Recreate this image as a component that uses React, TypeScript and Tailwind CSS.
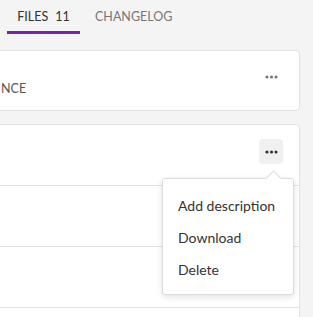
function Dots({ className }: { className?: string }) {
  return (
    <svg width="13" height="4" viewBox="0 0 13 4" className={className}>
      <circle cx="2" cy="2" r="1.6" fill="currentColor" />
      <circle cx="6.5" cy="2" r="1.6" fill="currentColor" />
      <circle cx="11" cy="2" r="1.6" fill="currentColor" />
    </svg>
  );
}

export default function App() {
  return (
    <div className="h-[317px] w-[313px] overflow-hidden bg-[#f4f4f4] font-['Lato',sans-serif]">
      <div className="flex h-[50px] items-start pl-[7px]">
        <div className="flex h-[34px] w-[73px] flex-col items-center justify-end">
          <div className="flex items-baseline gap-[7px] text-[12.5px] leading-none text-[#333]">
            <span>FILES</span>
            <span>11</span>
          </div>
          <div className="mt-[8px] h-[3px] w-full bg-[#7624aa]" />
        </div>
        <div className="ml-[15px] flex h-[34px] flex-col justify-end">
          <span className="text-[12.5px] leading-none text-[#777]">CHANGELOG</span>
          <div className="mt-[8px] h-[3px]" />
        </div>
      </div>

      <div className="-ml-4 mr-[13px] flex h-[61px] items-start justify-between rounded-[4px] border border-[#e2e2e2] bg-white">
        <div className="pt-[32px] text-[12.5px] leading-none text-[#555]">
          <span className="pl-[16px]">NCE</span>
        </div>
        <Dots className="mr-[21px] mt-[24px] text-[#777]" />
      </div>

      <div className="relative -ml-4 mr-[13px] mt-[13px] rounded-[4px] border border-[#e2e2e2] bg-white">
        <div className="flex h-[61px] items-start justify-end border-b border-[#e2e2e2] pr-[16px] pt-[14px]">
          <button className="flex h-[25px] w-[24px] items-center justify-center rounded-[4px] bg-[#f0f0f0] text-[#333]">
            <Dots />
          </button>
        </div>
        <div className="h-[61px] border-b border-[#e2e2e2]" />
        <div className="h-[61px] border-b border-[#e2e2e2]" />
        <div className="h-[20px]" />

        <div className="absolute left-[177px] top-[53px] w-[132px] rounded-[3px] border border-[#dcdcdc] bg-white pb-[14px] pt-[17px] shadow-[0_2px_6px_rgba(0,0,0,0.12)]">
          <div className="absolute -top-[10px] right-[10px] h-[10px] w-[20px] overflow-hidden">
            <div className="mx-auto mt-[4px] h-[13px] w-[13px] rotate-45 border border-[#dcdcdc] bg-white" />
          </div>
          <div className="flex flex-col gap-[12px] px-[15px] text-[14px] leading-[20px] text-[#333]">
            <span>Add description</span>
            <span>Download</span>
            <span>Delete</span>
          </div>
        </div>
      </div>
    </div>
  );
}
